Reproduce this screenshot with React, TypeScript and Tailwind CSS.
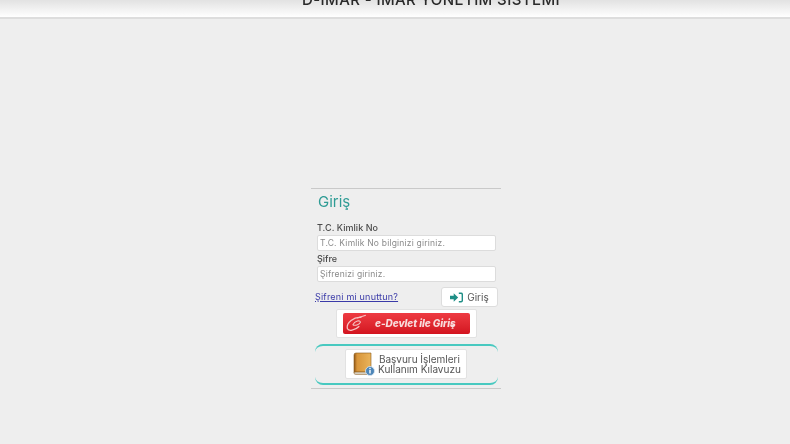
import React from "react";

const font = { fontFamily: '"Inter","Open Sans","Liberation Sans",sans-serif' };

function Book() {
  return (
    <svg width="22" height="24" viewBox="0 0 22 24" className="shrink-0">
      <defs>
        <linearGradient id="bk" x1="0" y1="0" x2="1" y2="0">
          <stop offset="0" stopColor="#8f5514" />
          <stop offset="0.18" stopColor="#d8953a" />
          <stop offset="1" stopColor="#eab45a" />
        </linearGradient>
      </defs>
      <path d="M1 3 Q1 1 3 1 H18 V20 H3 Q1 20 1 21 Z" fill="url(#bk)" stroke="#8a5a1c" strokeWidth="0.6" />
      <path d="M1 21 Q1 20 3 20 H18 V22.5 H3 Q1 22.5 1 21 Z" fill="#d8d0c0" stroke="#8a5a1c" strokeWidth="0.5" />
      <circle cx="17" cy="19" r="4.5" fill="#4d86b8" stroke="#dfe8f0" strokeWidth="0.8" />
      <rect x="16.3" y="18" width="1.4" height="3.5" fill="#fff" />
      <rect x="16.3" y="15.9" width="1.4" height="1.3" fill="#fff" />
    </svg>
  );
}

function Logo() {
  return (
    <svg width="24" height="20" viewBox="0 0 22 18" className="shrink-0">
      <path d="M16 3 C9 2 2 8 3 13 C4 16 10 15 14 11" fill="none" stroke="#f6c4c4" strokeWidth="1.2" />
      <path d="M8 10 C10 6 15 5 15 7.5 C14 10 10 10.500 8 10" fill="none" stroke="#f6c4c4" strokeWidth="1" />
      <path d="M12 3.500 L20 1" stroke="#f6c4c4" strokeWidth="1" />
    </svg>
  );
}

export default function App() {
  return (
    <div style={font} className="w-[790px] h-[444px] overflow-hidden bg-[#eeeeee] flex flex-col items-center blur-[0.4px]">
      <header className="w-full h-[19px] shrink-0 overflow-hidden bg-gradient-to-b from-[#e2e2e2] to-white border-b-2 border-[#dddddd] flex justify-center">
        <span className="ml-[72px] -mt-[7px] h-[14px] text-[15px] leading-[14px] font-medium tracking-[0.4px] text-[#2a2a2a] whitespace-nowrap">
          D-İMAR - İMAR YÖNETİM SİSTEMİ
        </span>
      </header>

      <main className="mt-[169px] ml-[22px] w-[190px] h-[201px] border-y border-[#c9c9c9] flex flex-col">
        <h1 className="ml-[7px] mt-[3px] text-[15px] leading-[20px] text-[#2f9c95]">Giriş</h1>

        <label className="ml-[6px] mt-[10px] text-[9px] leading-[12px] text-[#4a4a4a] font-medium tracking-[0.05px]">T.C. Kimlik No</label>
        <div className="ml-[6px] mt-[1px] w-[179px] h-[16px] bg-white border border-[#dcdcdc] rounded-[2px] pl-[2px] text-[8.5px] leading-[14px] tracking-[0.2px] text-[#8a8a8a] whitespace-nowrap">
          T.C. Kimlik No bilginizi giriniz.
        </div>

        <label className="ml-[6px] mt-[2px] text-[9px] leading-[12px] text-[#4a4a4a] font-medium">Şifre</label>
        <div className="ml-[6px] mt-[1px] w-[179px] h-[16px] bg-white border border-[#dcdcdc] rounded-[2px] pl-[2px] text-[8.5px] leading-[14px] tracking-[0.2px] text-[#8a8a8a] whitespace-nowrap">
          Şifrenizi giriniz.
        </div>

        <div className="mt-[5px] ml-[4px] w-[183px] h-[20px] flex items-center justify-between">
          <a className="text-[9px] tracking-[0.2px] text-[#3a3aa8] underline whitespace-nowrap">Şifreni mi unuttun?</a>
          <button className="w-[57px] h-[20px] bg-white border border-[#dddddd] rounded-[3px] flex items-center justify-center gap-[4px] text-[10px] text-[#555]">
            <svg width="13" height="11" viewBox="0 0 14 11">
              <path d="M0 3.500 H4 V0.800 L8.800 5.500 L4 10.200 V7.500 H0 Z" fill="#1f8f86" />
              <path d="M9.500 1 H12 Q13.300 1 13.300 2.500 V8.500 Q13.300 10 12 10 H9.500" fill="none" stroke="#1f8f86" strokeWidth="1.6" />
            </svg>
            Giriş
          </button>
        </div>

        <div className="mt-[2px] ml-[25px] w-[141px] h-[29px] bg-white border border-[#e2e2e2] rounded-[2px] flex items-center justify-center">
          <div className="w-[127px] h-[21px] rounded-[2px] bg-gradient-to-b from-[#ee3a42] to-[#d3131f] flex items-center pl-[1px] gap-[7px]">
            <Logo />
            <span className="text-[10px] font-extrabold italic tracking-[-0.05px] text-[#f8dcdc] whitespace-nowrap">e-Devlet ile Giriş</span>
          </div>
        </div>

        <div className="mt-[6px] ml-[4px] w-[183px] h-[41px] border-y-2 border-[#48c9c0] rounded-[8px] flex items-center justify-center pb-[2px] pr-[1px]">
          <div className="w-[122px] h-[30px] bg-white border border-[#e2e2e2] rounded-[2px] flex items-center pl-[7px] gap-[3px]">
            <Book />
            <span className="text-[10px] leading-[10px] text-[#555] text-center whitespace-nowrap">
              Başvuru İşlemleri
              <br />
              Kullanım Kılavuzu
            </span>
          </div>
        </div>
      </main>
    </div>
  );
}
